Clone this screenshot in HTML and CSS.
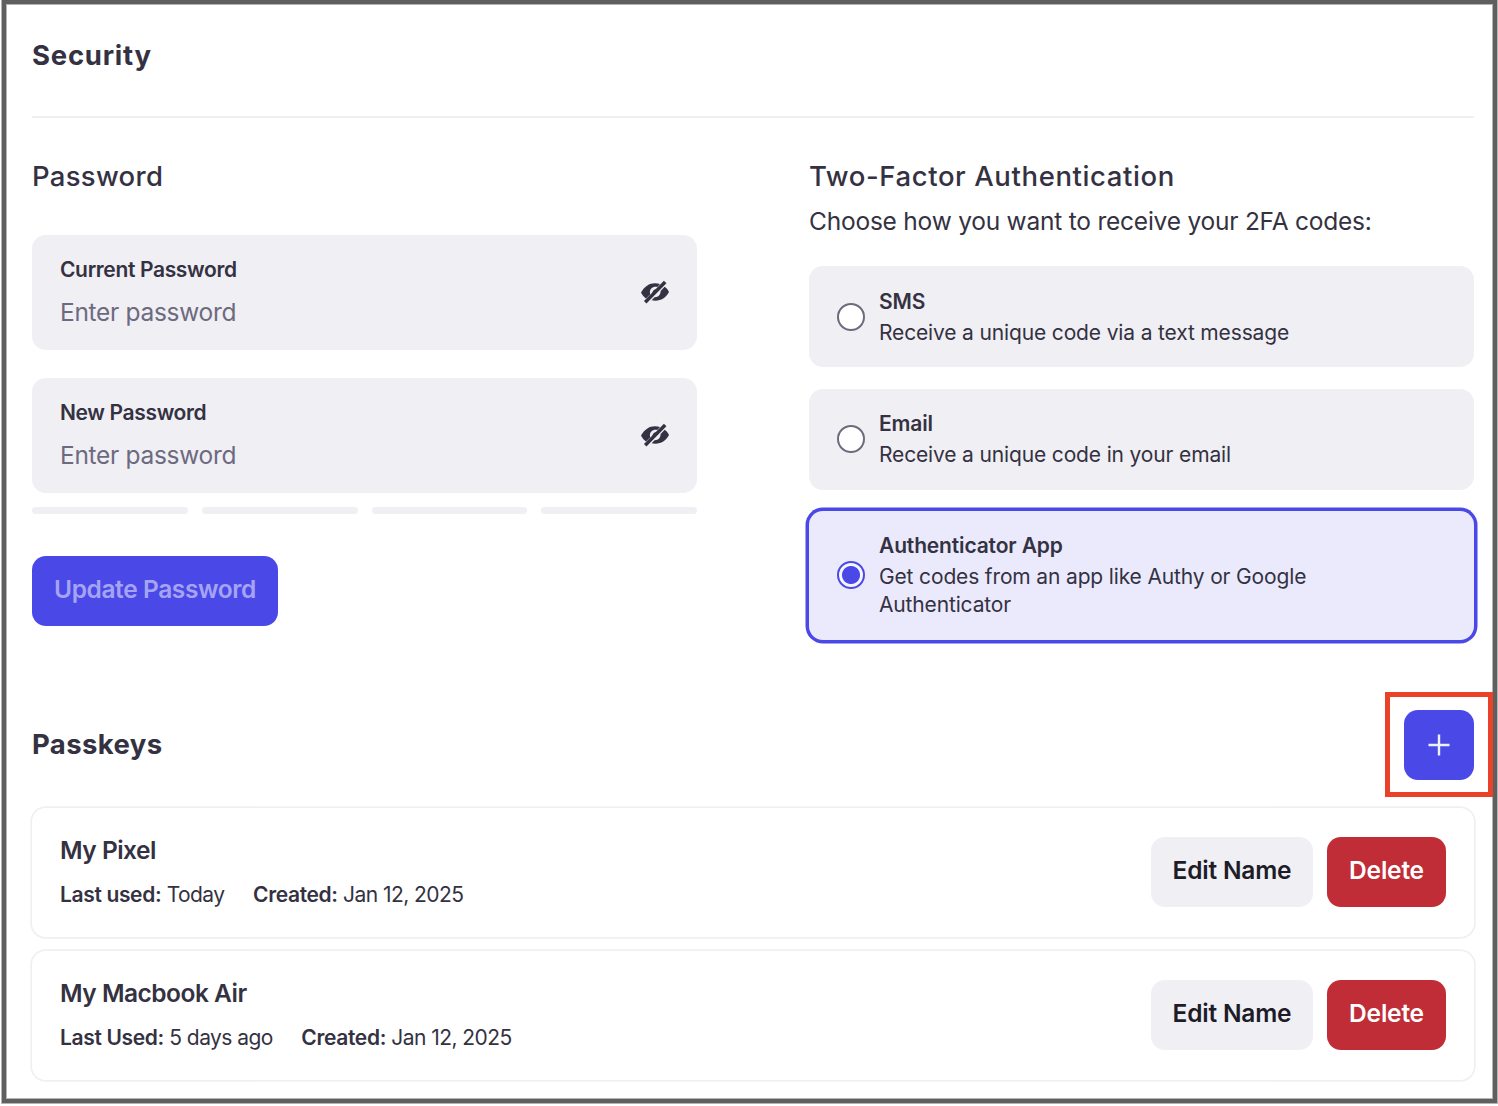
FILE: index.html
```html
<!DOCTYPE html>
<html lang="en">
    <head>
        <title>Security</title>
        <meta charset="UTF-8" />
        <link rel="stylesheet" href="styles.css">
    </head>

    <body>
        <svg class="sprite">
            <symbol id="eye-off" viewBox="0 0 28 24">
                <path d="M0 12.500C3.500 6.500 8 3.200 14 3.200C15.800 3.200 17.500 3.500 19 4L16.300 6.900C12 5.800 8.600 8.800 8.900 12.600C9 13.300 9.100 13.800 9.300 14.300L5 18.500C3 17 1.200 15 0 12.500Z" />
                <path d="M11.500 13.500A3.600 3.600 0 0 1 15.500 9.300Z" />
                <path d="M28 12C26.800 9.500 25.300 7.900 23.700 6.800L19.600 11C19.700 14.500 17.200 17.300 13.600 17.200L10.600 20.200C18 21.800 24.300 19 28 12Z" />
                <path d="M4.200 22.300L24.200 2" class="slash" />
            </symbol>
        </svg>

        <main class="frame">
            <header class="page-header"><h1>Security</h1></header>

            <div class="columns">
                <section class="password">
                    <h2>Password</h2>
                    <div class="field">
                        <div class="field-text">
                            <label for="current">Current Password</label>
                            <input id="current" type="password" placeholder="Enter password" />
                        </div>
                        <svg class="eye"><use href="#eye-off" /></svg>
                    </div>
                    <div class="field">
                        <div class="field-text">
                            <label for="new">New Password</label>
                            <input id="new" type="password" placeholder="Enter password" />
                        </div>
                        <svg class="eye"><use href="#eye-off" /></svg>
                    </div>
                    <div class="strength"><span></span><span></span><span></span><span></span></div>
                    <button class="button primary update">Update Password</button>
                </section>

                <section class="two-factor">
                    <h2>Two-Factor Authentication</h2>
                    <p class="intro">Choose how you want to receive your 2FA codes:</p>
                    <div class="options">
                        <label class="option">
                            <input type="radio" name="method" />
                            <span class="option-text"><strong>SMS</strong>Receive a unique code via a text message</span>
                        </label>
                        <label class="option">
                            <input type="radio" name="method" />
                            <span class="option-text"><strong>Email</strong>Receive a unique code in your email</span>
                        </label>
                        <label class="option selected">
                            <input type="radio" name="method" checked />
                            <span class="option-text"><strong>Authenticator App</strong>Get codes from an app like Authy or Google Authenticator</span>
                        </label>
                    </div>
                </section>
            </div>

            <section class="passkeys">
                <div class="passkeys-header">
                    <h2>Passkeys</h2>
                    <div class="add">
                        <button class="button primary plus">
                            <svg viewBox="0 0 22 22"><path d="M11 0.500V21.500M0.500 11H21.500" /></svg>
                        </button>
                        <div class="highlight"></div>
                    </div>
                </div>

                <div class="passkey">
                    <div class="passkey-info">
                        <h3>My Pixel</h3>
                        <p><span><b>Last used:</b> Today</span><span><b>Created:</b> Jan 12, 2025</span></p>
                    </div>
                    <button class="button edit">Edit Name</button>
                    <button class="button delete">Delete</button>
                </div>
                <div class="passkey">
                    <div class="passkey-info">
                        <h3>My Macbook Air</h3>
                        <p><span><b>Last Used:</b> 5 days ago</span><span><b>Created:</b> Jan 12, 2025</span></p>
                    </div>
                    <button class="button edit">Edit Name</button>
                    <button class="button delete">Delete</button>
                </div>
            </section>
        </main>
    </body>
</html>
```
FILE: styles.css
```css
* {
    box-sizing: border-box;
}

body {
    min-height: 100vh;
    margin: 0;
    background: #fff;
    color: #343242;
    font-family: Inter, 'Liberation Sans', sans-serif;
}

h1,
h2,
h3,
p {
    margin: 0;
}

button,
input {
    font-family: inherit;
}

.sprite {
    display: none;
}

.frame {
    width: 1495px;
    height: 1103px;
    margin-left: 2px;
    padding: 0 19px 0 26px;
    border: 4px solid #5f5f5f;
    box-shadow: 0 0 0 1px #b4b4b4, inset 0 0 0 1px #b4b4b4;
}

.page-header {
    height: 114px;
    padding-top: 32px;
    border-bottom: 2px solid #f0f0f2;
}

h1,
h2 {
    padding-bottom: 2px;
    font-size: 27.5px;
    line-height: 38px;
    font-weight: 500;
    letter-spacing: 0.6px;
}

h1 {
    font-weight: 700;
    letter-spacing: 0.75px;
}

.columns {
    display: grid;
    grid-template-columns: 1fr 1fr;
    gap: 112px;
    height: 592px;
    padding-top: 39px;
}

.password h2 {
    margin-bottom: 38px;
    letter-spacing: 0.3px;
}

.field {
    display: flex;
    align-items: center;
    height: 115px;
    margin-bottom: 28px;
    padding: 0 28px;
    border-radius: 14px;
    background: #f0eff4;
}

.field-text {
    display: flex;
    flex: 1;
    flex-direction: column;
}

.field label {
    font-size: 21px;
    line-height: 28px;
    font-weight: 600;
    letter-spacing: -0.35px;
}

.field input {
    height: 36px;
    margin-top: 10px;
    padding: 0;
    border: 0;
    background: none;
    font-size: 24.5px;
    letter-spacing: -0.3px;
}

.field input::placeholder {
    color: #6d6a80;
}

.eye {
    width: 28px;
    height: 24px;
    margin-bottom: 2px;
    fill: #343242;
}

.slash {
    fill: none;
    stroke: #343242;
    stroke-width: 3.5;
}

.strength {
    display: flex;
    gap: 14px;
    margin-top: -14px;
}

.strength span {
    flex: 1;
    height: 7px;
    border-radius: 4px;
    background: #f0eff4;
}

.button {
    height: 70px;
    padding: 0 0 4px;
    border: 0;
    border-radius: 14px;
    font-size: 24.5px;
    font-weight: 600;
    letter-spacing: -0.2px;
}

.primary {
    background: #4a49e7;
    color: #a5a4f3;
}

.update {
    width: 246px;
    margin-top: 42px;
    padding-bottom: 5px;
    letter-spacing: -0.4px;
}

.intro {
    margin-top: 6px;
    font-size: 24.5px;
    line-height: 36px;
    letter-spacing: -0.22px;
}

.options {
    display: flex;
    flex-direction: column;
    gap: 21.5px;
    margin-top: 27px;
}

.option {
    display: flex;
    align-items: center;
    gap: 14px;
    height: 101px;
    padding: 0 28px;
    border-radius: 14px;
    background: #f0eff4;
}

.option input {
    flex: none;
    width: 28px;
    height: 28px;
    margin: 0;
    border: 2px solid #6d6a7e;
    border-radius: 50%;
    background: #fff;
    appearance: none;
}

.option-text {
    width: 460px;
    padding-top: 1px;
    font-size: 21px;
    line-height: 28px;
    letter-spacing: -0.15px;
}

.option strong {
    display: block;
    margin-bottom: 3px;
    font-weight: 600;
    letter-spacing: -0.15px;
}

.option.selected {
    height: 129px;
    padding-bottom: 1px;
    background: #ebeafd;
    box-shadow: 0 0 0 3.5px #4a49e7;
}

.option.selected input {
    border-color: #4a49e7;
    background: radial-gradient(circle, #4a49e7 8.5px, #f6f5fe 9.5px);
}

.passkeys-header {
    display: flex;
    align-items: center;
    justify-content: space-between;
    margin-bottom: 28px;
}

.passkeys h2 {
    font-weight: 700;
    letter-spacing: 0.4px;
}

.add {
    position: relative;
    height: 70px;
}

.plus {
    display: flex;
    align-items: center;
    justify-content: center;
    width: 70px;
    padding: 0;
}

.plus svg {
    width: 22px;
    height: 22px;
    stroke: #f0effd;
    stroke-width: 2.4;
}

/* callout drawn over the button */
.highlight {
    position: absolute;
    inset: -18px -19px -17px -19px;
    border: 5px solid #ea4228;
}

.passkey {
    display: flex;
    align-items: center;
    gap: 14px;
    height: 129px;
    margin-bottom: 14px;
    padding: 0 28px 1px;
    border-radius: 14px;
    box-shadow: 0 0 0 1.75px #f0eff4;
}

.passkey-info {
    flex: 1;
    padding-bottom: 1px;
}

h3 {
    margin-bottom: 15px;
    font-size: 24.5px;
    line-height: 32px;
    font-weight: 600;
    letter-spacing: -0.5px;
}

.passkey p {
    display: flex;
    gap: 28.5px;
    font-size: 21px;
    line-height: 28px;
    letter-spacing: -0.55px;
}

.passkey b {
    font-weight: 600;
    letter-spacing: -0.35px;
}

.edit {
    width: 162px;
    background: #f0eff4;
    color: #1d1c27;
}

.delete {
    width: 119px;
    background: #c02d37;
    color: #fff;
}
```
